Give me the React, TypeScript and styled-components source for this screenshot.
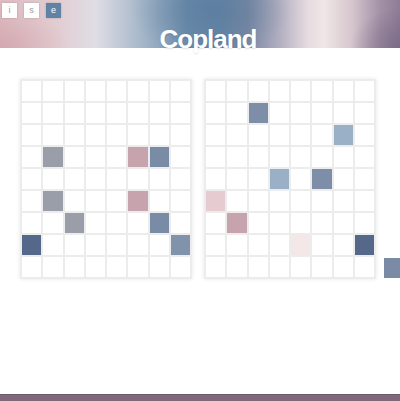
import React from "react";
import styled, { createGlobalStyle } from "styled-components";

const Global = createGlobalStyle`
  html, body { margin: 0; padding: 0; background: #ffffff; }
  body { font-family: "Liberation Sans", Arial, sans-serif; overflow: hidden; }
  #root { width: 400px; height: 401px; position: relative; }
`;

const Page = styled.div`
  position: relative;
  width: 400px;
  height: 401px;
  overflow: hidden;
  background: #fff;
`;

const Banner = styled.header`
  position: relative;
  height: 48px;
  background:
    radial-gradient(ellipse 70px 40px at 0px 48px, rgba(205, 150, 160, 0.55), rgba(205, 150, 160, 0) 100%),
    radial-gradient(ellipse 80px 45px at 210px 10px, rgba(85, 120, 155, 0.55), rgba(85, 120, 155, 0) 100%),
    radial-gradient(ellipse 50px 40px at 400px 48px, rgba(110, 95, 125, 0.6), rgba(110, 95, 125, 0) 100%),
    linear-gradient(90deg, #dcbcc1 0%, #e2cdd1 14%, #dfdde5 24%, #a3b5c8 36%, #6b8cab 47%, #6686a6 55%, #7a88a3 62%, #b3afc1 70%, #e6dcdf 77%, #efe6e6 81%, #d5c6cd 88%, #a391a8 95%, #8e7c96 100%);
`;

const ToolBar = styled.nav`
  position: absolute;
  top: 3px;
  left: 2px;
  display: flex;
  gap: 7px;
`;

const ToolButton = styled.button<{ $active?: boolean }>`
  width: 15px;
  height: 15px;
  padding: 0;
  border: none;
  display: flex;
  align-items: center;
  justify-content: center;
  font-family: "Liberation Sans", Arial, sans-serif;
  font-size: 9px;
  line-height: 1;
  color: ${(p) => (p.$active ? "#ffffff" : "#9a9a9a")};
  background: ${(p) => (p.$active ? "#5f83a5" : "#ffffff")};
  box-shadow: 0 0 2px rgba(0, 0, 0, 0.2);
`;

const Title = styled.h1`
  position: absolute;
  left: 0;
  right: 0;
  top: 24px;
  margin: 0;
  text-align: center;
  padding-left: 16px;
  font-family: "Liberation Sans", Arial, sans-serif;
  font-weight: 700;
  font-size: 26px;
  letter-spacing: -1px;
  line-height: 30px;
  color: #ffffff;
  text-shadow: 0 1px 2px rgba(0, 0, 0, 0.12);
`;

const Main = styled.main`
  position: relative;
  display: flex;
  gap: 12px;
  padding: 31px 0 0 20px;
`;

const Grid = styled.div`
  display: grid;
  grid-template-columns: repeat(8, 19.25px);
  grid-auto-rows: 20px;
  gap: 2px;
  padding: 2px;
  width: 172px;
  box-sizing: border-box;
  background: #ececec;
  box-shadow: 0 0 4px rgba(0, 0, 0, 0.1);
`;

const Cell = styled.div<{ $color?: string }>`
  background: ${(p) => p.$color || "#ffffff"};
`;

const Stray = styled.div`
  position: absolute;
  left: 384px;
  top: 210px;
  width: 20px;
  height: 20px;
  background: #7b8ba5;
`;

const Footer = styled.footer`
  position: absolute;
  left: 0;
  right: 0;
  bottom: 0;
  height: 6px;
  background: #80687a;
  border-top: 1px solid #6f5869;
`;

const GRAY = "#9a9ea8";
const PINK = "#c6a3ad";
const BLUE = "#7a8ba5";
const DARK = "#56688a";
const SLATE = "#8193aa";
const LIGHTBLUE = "#99b0c7";
const PALEPINK = "#e6cbd0";
const FAINT = "#f3e7e8";

const leftCells: Record<string, string> = {
  "3-1": GRAY,
  "3-5": PINK,
  "3-6": BLUE,
  "5-1": GRAY,
  "5-5": PINK,
  "6-2": GRAY,
  "6-6": BLUE,
  "7-0": DARK,
  "7-7": SLATE,
};

const rightCells: Record<string, string> = {
  "1-2": "#7f8ea8",
  "2-6": LIGHTBLUE,
  "4-3": LIGHTBLUE,
  "4-5": "#7e8ea8",
  "5-0": PALEPINK,
  "6-1": PINK,
  "7-4": FAINT,
  "7-7": DARK,
};

function Board({ cells }: { cells: Record<string, string> }) {
  const items = [];
  for (let r = 0; r < 9; r++) {
    for (let c = 0; c < 8; c++) {
      items.push(<Cell key={`${r}-${c}`} $color={cells[`${r}-${c}`]} />);
    }
  }
  return <Grid>{items}</Grid>;
}

export default function App() {
  return (
    <Page>
      <Global />
      <Banner>
        <ToolBar>
          <ToolButton>i</ToolButton>
          <ToolButton>s</ToolButton>
          <ToolButton $active>e</ToolButton>
        </ToolBar>
        <Title>Copland</Title>
      </Banner>
      <Main>
        <Board cells={leftCells} />
        <Board cells={rightCells} />
        <Stray />
      </Main>
      <Footer />
    </Page>
  );
}
